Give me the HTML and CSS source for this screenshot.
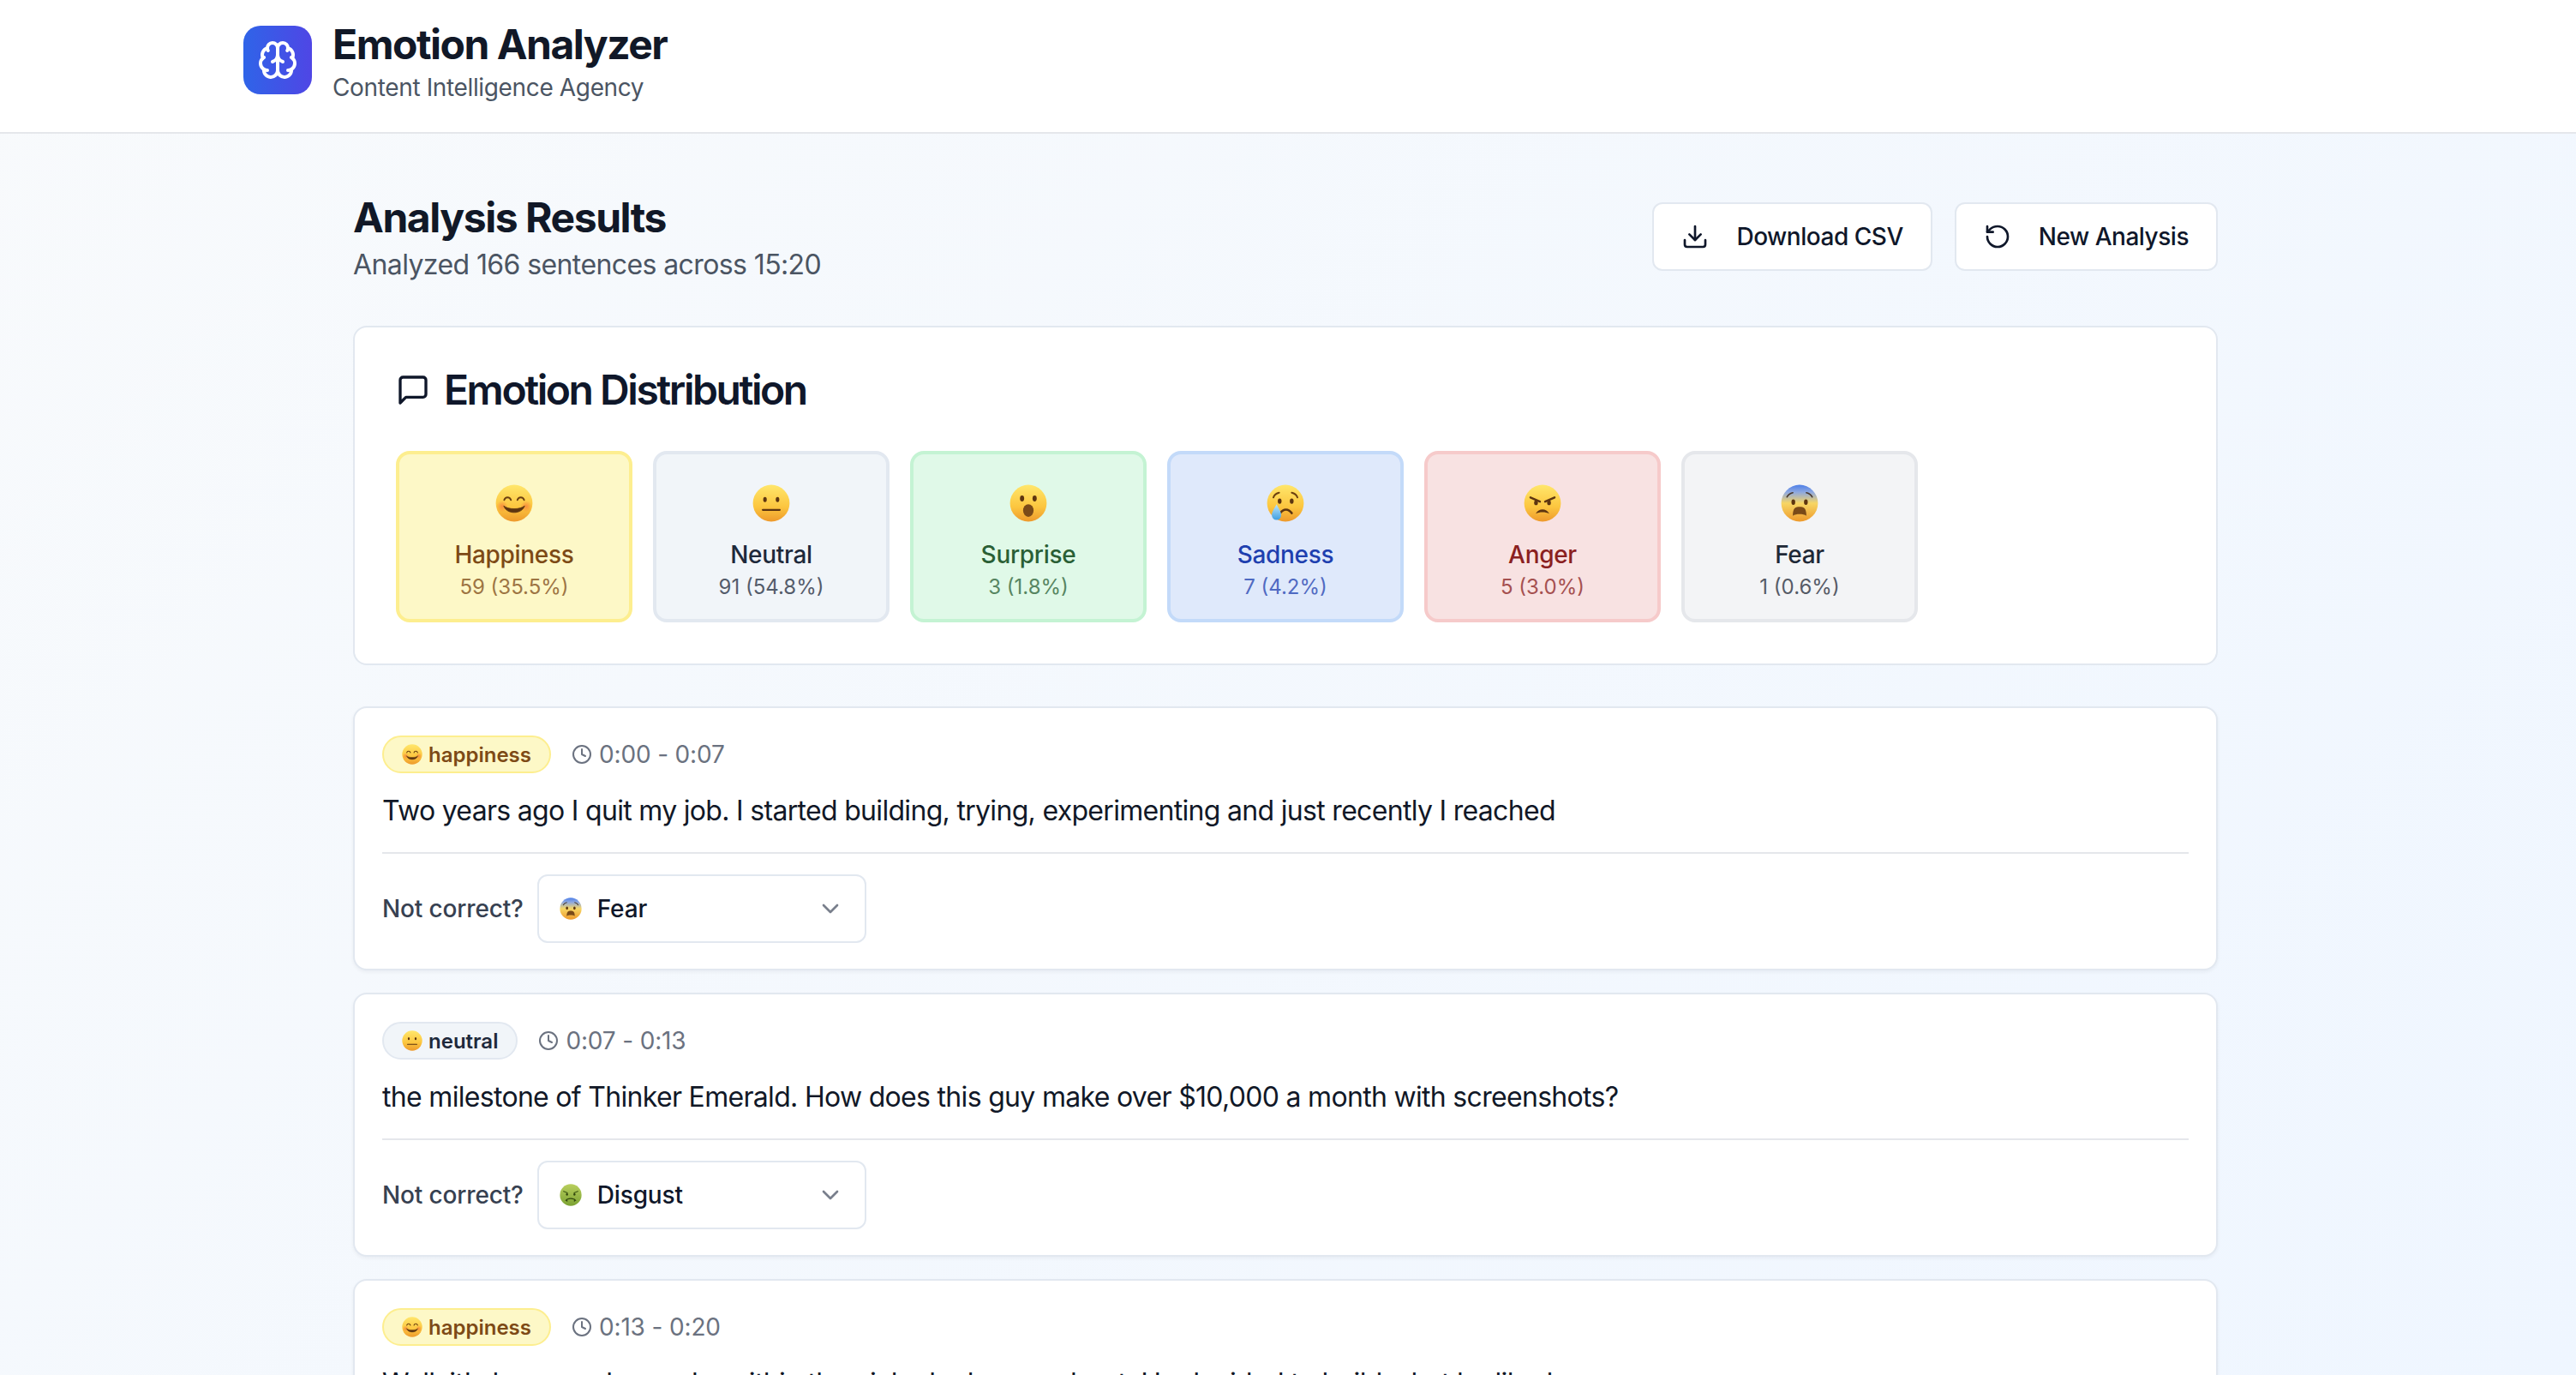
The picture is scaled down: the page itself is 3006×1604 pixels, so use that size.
FILE: index.html
```html
<!DOCTYPE html>
<html>
<head>
    <meta http-equiv="Content-Type" content="text/html; charset=UTF-8">
    <title>Emotion Analyzer</title>
    <link rel="stylesheet" href="styles.css">
</head>
<body>
<!-- emoji faces, reused below -->
<svg class="defs" xmlns="http://www.w3.org/2000/svg">
    <defs>
        <linearGradient id="g-face" x1="0" y1="0" x2="0" y2="1">
            <stop offset="0" stop-color="#ffe66b"/><stop offset="0.6" stop-color="#fcc63f"/><stop offset="1" stop-color="#ee9a2c"/>
        </linearGradient>
        <linearGradient id="g-fear" x1="0" y1="0" x2="0" y2="1">
            <stop offset="0" stop-color="#4d7fe8"/><stop offset="0.2" stop-color="#8ea8e0"/><stop offset="0.5" stop-color="#f7d664"/><stop offset="1" stop-color="#ee9a2c"/>
        </linearGradient>
        <linearGradient id="g-sick" x1="0" y1="0" x2="0" y2="1">
            <stop offset="0" stop-color="#b9cf5e"/><stop offset="1" stop-color="#7ba232"/>
        </linearGradient>
        <linearGradient id="g-tear" x1="0" y1="0" x2="0" y2="1">
            <stop offset="0" stop-color="#bfe6fb"/><stop offset="1" stop-color="#3f9fe0"/>
        </linearGradient>
        <radialGradient id="g-blush">
            <stop offset="0" stop-color="#f7773c" stop-opacity=".7"/><stop offset="1" stop-color="#f7773c" stop-opacity="0"/>
        </radialGradient>
    </defs>
    <symbol id="e-happy" viewBox="0 0 36 36">
        <circle cx="18" cy="18" r="17.500" fill="url(#g-face)"/>
        <circle cx="6.500" cy="21" r="5.500" fill="url(#g-blush)"/><circle cx="29.500" cy="21" r="5.500" fill="url(#g-blush)"/>
        <path d="M8.500 15c1-3.400 5.400-3.400 6.400 0M21.100 15c1-3.400 5.400-3.400 6.400 0" fill="none" stroke="#6b3f10" stroke-width="1.600" stroke-linecap="round"/>
        <path d="M8 20.500c2.500 8.500 17.500 8.500 20 0-4 3.800-16 3.800-20 0z" fill="#5d3510" stroke="#5d3510" stroke-width=".6" stroke-linejoin="round"/>
    </symbol>
    <symbol id="e-neutral" viewBox="0 0 36 36">
        <circle cx="18" cy="18" r="17.500" fill="url(#g-face)"/>
        <ellipse cx="12" cy="14.500" rx="1.700" ry="2.500" fill="#5d3510"/><ellipse cx="24" cy="14.500" rx="1.700" ry="2.500" fill="#5d3510"/>
        <rect x="9" y="23.500" width="18" height="1.800" rx=".9" fill="#5d3510"/>
    </symbol>
    <symbol id="e-surprise" viewBox="0 0 36 36">
        <circle cx="18" cy="18" r="17.500" fill="url(#g-face)"/>
        <ellipse cx="12" cy="13.500" rx="2" ry="2.800" fill="#5d3510"/><ellipse cx="24" cy="13.500" rx="2" ry="2.800" fill="#5d3510"/>
        <ellipse cx="18" cy="25" rx="5" ry="6" fill="#7a4a18"/>
    </symbol>
    <symbol id="e-sad" viewBox="0 0 36 36">
        <circle cx="18" cy="18" r="17.500" fill="url(#g-face)"/>
        <path d="M6.500 12.500c1-2.500 3-4 5.500-4.500M29.500 12.500c-1-2.500-3-4-5.500-4.500" fill="none" stroke="#6b3f10" stroke-width="1.600" stroke-linecap="round"/>
        <ellipse cx="12.500" cy="16" rx="1.800" ry="2.600" fill="#5d3510"/><ellipse cx="24" cy="16" rx="1.800" ry="2.600" fill="#5d3510"/>
        <path d="M13 27.500c3-4.500 8-4.500 11 0" fill="none" stroke="#5d3510" stroke-width="2.200" stroke-linecap="round"/>
        <path d="M9.500 19c2 4 4.500 7 4.500 10.500a4.500 4.500 0 0 1-9 0c0-3.500 2.500-6.500 4.500-10.500z" fill="url(#g-tear)"/>
    </symbol>
    <symbol id="e-angry" viewBox="0 0 36 36">
        <circle cx="18" cy="18" r="17.500" fill="url(#g-face)"/>
        <path d="M6.500 12.500l9 4M29.500 12.500l-9 4" stroke="#5d3510" stroke-width="2" stroke-linecap="round"/>
        <ellipse cx="11.800" cy="17.500" rx="1.800" ry="2.400" fill="#5d3510"/><ellipse cx="24.200" cy="17.500" rx="1.800" ry="2.400" fill="#5d3510"/>
        <path d="M11.500 28c3-5.500 10-5.500 13 0-3.500-2-9.500-2-13 0z" fill="#5d3510"/>
    </symbol>
    <symbol id="e-fear" viewBox="0 0 36 36">
        <circle cx="18" cy="18" r="17.500" fill="url(#g-fear)"/>
        <path d="M6 12c1-2 3-3.400 5.500-4M30 12c-1-2-3-3.400-5.500-4" fill="none" stroke="#4a3a30" stroke-width="1.400" stroke-linecap="round"/>
        <ellipse cx="12" cy="17" rx="1.800" ry="2.600" fill="#5d3510"/><ellipse cx="24" cy="17" rx="1.800" ry="2.600" fill="#5d3510"/>
        <path d="M11.500 30c0-8 3-8.500 6.500-8.500s6.500 .500 6.500 8.500c-3-2-10-2-13 0z" fill="#7a4a18"/>
    </symbol>
    <symbol id="e-sick" viewBox="0 0 36 36">
        <circle cx="18" cy="18" r="17.500" fill="url(#g-sick)"/>
        <path d="M6.500 12l6 2.500M29.500 12l-6 2.500" stroke="#3f5a14" stroke-width="1.600" stroke-linecap="round"/>
        <ellipse cx="12" cy="17" rx="1.600" ry="2.200" fill="#33480f"/><ellipse cx="24" cy="17" rx="1.600" ry="2.200" fill="#33480f"/>
        <path d="M10 27c3-4.500 13-4.500 16 0M12 25v3M24 25v3" fill="none" stroke="#33480f" stroke-width="1.600" stroke-linecap="round"/>
    </symbol>
    <symbol id="i-clock" viewBox="0 0 24 24">
        <circle cx="12" cy="12" r="10"/><polyline points="12 6 12 12 16 14"/>
    </symbol>
    <symbol id="i-chevron" viewBox="0 0 24 24">
        <path d="m6 9 6 6 6-6"/>
    </symbol>
</svg>

<header class="top">
    <div class="top-inner">
        <div class="logo">
            <svg class="logo-icon" viewBox="0 0 24 24">
                <path d="M12 5a3 3 0 1 0-5.997.125 4 4 0 0 0-2.526 5.770 4 4 0 0 0 .556 6.588A4 4 0 1 0 12 18Z"/>
                <path d="M12 5a3 3 0 1 1 5.997.125 4 4 0 0 1 2.526 5.770 4 4 0 0 1-.556 6.588A4 4 0 1 1 12 18Z"/>
                <path d="M15 13a4.500 4.500 0 0 1-3-4 4.500 4.500 0 0 1-3 4"/>
                <path d="M17.599 6.500a3 3 0 0 0 .399-1.375"/>
                <path d="M6.003 5.125A3 3 0 0 0 6.401 6.500"/>
                <path d="M3.477 10.896a4 4 0 0 1 .585-.396"/>
                <path d="M19.938 10.500a4 4 0 0 1 .585.396"/>
                <path d="M6 18a4 4 0 0 1-1.967-.516"/>
                <path d="M19.967 17.484A4 4 0 0 1 18 18"/>
            </svg>
        </div>
        <div>
            <h1 class="app-name">Emotion Analyzer</h1>
            <p class="app-sub">Content Intelligence Agency</p>
        </div>
    </div>
</header>

<main class="main">
    <div class="results-head">
        <div>
            <h2 class="results-title">Analysis Results</h2>
            <p class="results-sub">Analyzed 166 sentences across 15:20</p>
        </div>
        <div class="actions">
            <button class="btn">
                <svg class="btn-icon" viewBox="0 0 24 24"><path d="M21 15v4a2 2 0 0 1-2 2H5a2 2 0 0 1-2-2v-4"/><polyline points="7 10 12 15 17 10"/><line x1="12" y1="15" x2="12" y2="3"/></svg>
                Download CSV
            </button>
            <button class="btn">
                <svg class="btn-icon" viewBox="0 0 24 24"><path d="M3 12a9 9 0 1 0 9-9 9.750 9.750 0 0 0-6.740 2.740L3 8"/><path d="M3 3v5h5"/></svg>
                New Analysis
            </button>
        </div>
    </div>

    <section class="card dist">
        <h3 class="dist-title">
            <svg class="dist-icon" viewBox="0 0 24 24"><path d="M21 15a2 2 0 0 1-2 2H7l-4 4V5a2 2 0 0 1 2-2h14a2 2 0 0 1 2 2z"/></svg>
            Emotion Distribution
        </h3>
        <div class="tiles">
            <div class="tile happiness">
                <svg class="tile-emoji"><use href="#e-happy"/></svg>
                <div class="tile-name">Happiness</div>
                <div class="tile-count">59 (35.5%)</div>
            </div>
            <div class="tile neutral">
                <svg class="tile-emoji"><use href="#e-neutral"/></svg>
                <div class="tile-name">Neutral</div>
                <div class="tile-count">91 (54.8%)</div>
            </div>
            <div class="tile surprise">
                <svg class="tile-emoji"><use href="#e-surprise"/></svg>
                <div class="tile-name">Surprise</div>
                <div class="tile-count">3 (1.8%)</div>
            </div>
            <div class="tile sadness">
                <svg class="tile-emoji"><use href="#e-sad"/></svg>
                <div class="tile-name">Sadness</div>
                <div class="tile-count">7 (4.2%)</div>
            </div>
            <div class="tile anger">
                <svg class="tile-emoji"><use href="#e-angry"/></svg>
                <div class="tile-name">Anger</div>
                <div class="tile-count">5 (3.0%)</div>
            </div>
            <div class="tile fear">
                <svg class="tile-emoji"><use href="#e-fear"/></svg>
                <div class="tile-name">Fear</div>
                <div class="tile-count">1 (0.6%)</div>
            </div>
        </div>
    </section>

    <div class="sentences">
        <article class="card sentence">
            <div class="meta">
                <span class="pill happiness"><svg class="pill-emoji"><use href="#e-happy"/></svg>happiness</span>
                <span class="time"><svg class="time-icon"><use href="#i-clock"/></svg>0:00 - 0:07</span>
            </div>
            <p class="text">Two years ago I quit my job. I started building, trying, experimenting and just recently I reached</p>
            <div class="fix">
                <span class="fix-label">Not correct?</span>
                <div class="select">
                    <svg class="select-emoji"><use href="#e-fear"/></svg>
                    <span class="select-value">Fear</span>
                    <svg class="chevron"><use href="#i-chevron"/></svg>
                </div>
            </div>
        </article>
        <article class="card sentence">
            <div class="meta">
                <span class="pill neutral"><svg class="pill-emoji"><use href="#e-neutral"/></svg>neutral</span>
                <span class="time"><svg class="time-icon"><use href="#i-clock"/></svg>0:07 - 0:13</span>
            </div>
            <p class="text">the milestone of Thinker Emerald. How does this guy make over $10,000 a month with screenshots?</p>
            <div class="fix">
                <span class="fix-label">Not correct?</span>
                <div class="select">
                    <svg class="select-emoji"><use href="#e-sick"/></svg>
                    <span class="select-value">Disgust</span>
                    <svg class="chevron"><use href="#i-chevron"/></svg>
                </div>
            </div>
        </article>
        <article class="card sentence">
            <div class="meta">
                <span class="pill happiness"><svg class="pill-emoji"><use href="#e-happy"/></svg>happiness</span>
                <span class="time"><svg class="time-icon"><use href="#i-clock"/></svg>0:13 - 0:20</span>
            </div>
            <p class="text">Well, it's because he works within the niche he knows about. He decided to build what he liked</p>
        </article>
    </div>
</main>
</body>
</html>
```

FILE: styles.css
```css
html,body{margin:0; padding:0; height:1604px; overflow:hidden;}
body{font-family:Inter,"Liberation Sans",sans-serif; color:#111827;
    background:linear-gradient(135deg,#f8fafc 0%,#eff6ff 100%);}
h1,h2,h3,p{margin:0;}
.defs{position:absolute; width:0; height:0;}

/* header */
.top{background:#fff; border-bottom:2px solid #e5e7eb; height:154px;}
.top-inner{width:2432px; margin-left:284px; padding-top:30px; display:flex; gap:24px;}
.logo{width:80px; height:80px; border-radius:20px; background:linear-gradient(90deg,#2f64e8,#4f46e5);
    display:flex; align-items:center; justify-content:center;}
.logo-icon{width:48px; height:48px; fill:none; stroke:#fff; stroke-width:2; stroke-linecap:round; stroke-linejoin:round;}
.app-name{font-size:48px; line-height:56px; font-weight:700; letter-spacing:-1.5px; color:#111827; margin-top:-6px;}
.app-sub{font-size:28px; line-height:40px; letter-spacing:-0.36px; color:#4b5563; margin-top:2px;}

/* main */
.main{width:2176px; margin-left:412px; padding-top:64px;}
.results-head{display:flex; justify-content:space-between; align-items:center; margin-bottom:48px;}
.results-title{font-size:48px; line-height:64px; font-weight:700; letter-spacing:-1.45px; color:#111827; padding-top:2px;}
.results-sub{font-size:32px; line-height:46px; letter-spacing:-0.6px; color:#4b5563;}
.actions{display:flex; gap:26px;}
.btn{font:500 28px/40px Inter,"Liberation Sans",sans-serif; letter-spacing:-0.48px; color:#0f172a; background:#fff;
    border:2px solid #e2e8f0; border-radius:12px; padding:18px 32px; display:flex; align-items:center; gap:32px;}
.btn-icon{width:32px; height:32px; fill:none; stroke:#0f172a; stroke-width:2; stroke-linecap:round; stroke-linejoin:round;}

.card{background:#fff; border:2px solid #e2e8f0; border-radius:16px; box-sizing:border-box;}

/* distribution */
.dist{padding:48px; height:396px; margin-bottom:48px;}
.dist-title{font-size:48px; line-height:50px; font-weight:600; letter-spacing:-2.45px; color:#0f172a;
    display:flex; align-items:center; gap:16px; margin-bottom:46px;}
.dist-icon{width:40px; height:40px; fill:none; stroke:#0f172a; stroke-width:2; stroke-linecap:round; stroke-linejoin:round;}
.tiles{display:grid; grid-template-columns:repeat(7,1fr); gap:24px;}
.tile{height:200px; box-sizing:border-box; border:4px solid; border-radius:16px;
    display:flex; flex-direction:column; align-items:center; padding-top:35px;}
.tile-emoji{width:44px; height:44px;}
.tile-name{font-size:28px; line-height:40px; font-weight:500; letter-spacing:-0.3px; margin-top:18px;}
.tile-count{font-size:24px; line-height:32px; opacity:.75; margin-top:2px;}

.happiness{background:#fdf8c7; border-color:#fdee8f; color:#7d4a16;}
.neutral{background:#f1f5f9; border-color:#e2e8f0; color:#1e293b;}
.surprise{background:#e0f9e8; border-color:#c4f3d3; color:#2a5f35;}
.sadness{background:#dfe9fb; border-color:#c3daf9; color:#1e40af;}
.anger{background:#f8e2e2; border-color:#f6caca; color:#8a2020;}
.fear{background:#f3f4f6; border-color:#e5e7eb; color:#1f2937;}

/* sentences */
.sentences{display:flex; flex-direction:column; gap:26px;}
.sentence{padding:32px; box-shadow:0 2px 4px rgba(15,23,42,.05); height:308px;}
.meta{display:flex; align-items:center; gap:24px;}
.pill{display:flex; align-items:center; gap:7px; height:44px; box-sizing:border-box; padding:0 21px;
    border-width:2px; border-style:solid; border-radius:22px; font-size:24px; font-weight:600;}
.pill-emoji{width:24px; height:24px;}
.time{display:flex; align-items:center; gap:8px; font-size:28px; letter-spacing:-0.15px; color:#6b7280;}
.time-icon{width:24px; height:24px; fill:none; stroke:#6b7280; stroke-width:2; stroke-linecap:round; stroke-linejoin:round;}
.text{font-size:32px; line-height:48px; letter-spacing:-0.69px; color:#111827; margin-top:20px;}
.fix{display:flex; align-items:center; gap:16px; border-top:2px solid #e5e7eb; margin-top:24px; padding-top:24px;}
.fix-label{font-size:28px; font-weight:500; letter-spacing:-0.15px; color:#374151;}
.select{width:384px; height:80px; box-sizing:border-box; border:2px solid #e2e8f0; border-radius:12px;
    display:flex; align-items:center; padding:0 24px;}
.select-emoji{width:26px; height:26px; margin-right:18px;}
.select-value{font-size:28px; font-weight:500; letter-spacing:-0.15px; color:#0f172a; flex:1;}
.chevron{width:32px; height:32px; fill:none; stroke:#6b7280; stroke-width:2; stroke-linecap:round; stroke-linejoin:round; opacity:.9;}
```
